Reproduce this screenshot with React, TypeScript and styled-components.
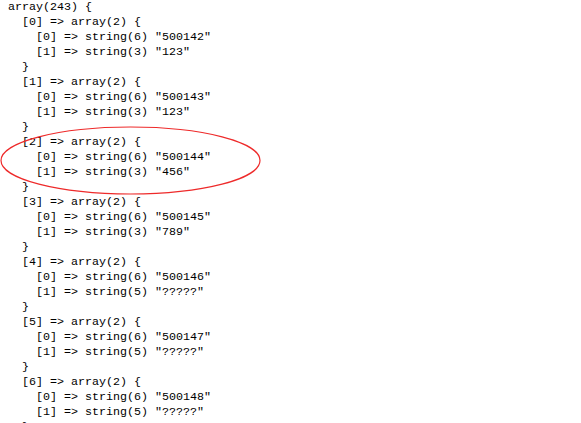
import React from "react";
import styled, { createGlobalStyle } from "styled-components";

const Global = createGlobalStyle`
  html, body { margin: 0; padding: 0; background: #ffffff; }
  body { overflow: hidden; }
`;

const Page = styled.div`
  position: relative;
  width: 581px;
  height: 423px;
  overflow: hidden;
  background: #ffffff;
`;

const Dump = styled.pre`
  margin: 0;
  padding: 0 0 0 8px;
  font-family: "Liberation Mono", "DejaVu Sans Mono", monospace;
  font-size: 11.67px;
  line-height: 15px;
  color: #000000;
  white-space: pre;
`;

const Line = styled.div<{ $depth: number }>`
  padding-left: ${(p) => p.$depth * 14}px;
  height: 15px;
`;

const Circle = styled.svg`
  position: absolute;
  left: 0;
  top: 0;
  pointer-events: none;
`;

const rows: [string, string][] = [
  ["500142", "123"],
  ["500143", "123"],
  ["500144", "456"],
  ["500145", "789"],
  ["500146", "?????"],
  ["500147", "?????"],
  ["500148", "?????"],
];

export default function App() {
  const lines: { depth: number; text: string }[] = [
    { depth: 0, text: "array(243) {" },
  ];
  rows.forEach(([a, b], i) => {
    lines.push({ depth: 1, text: `[${i}] => array(2) {` });
    lines.push({ depth: 2, text: `[0] => string(${a.length}) "${a}"` });
    lines.push({ depth: 2, text: `[1] => string(${b.length}) "${b}"` });
    lines.push({ depth: 1, text: "}" });
  });
  return (
    <Page>
      <Global />
      <Dump>
        {lines.map((l, i) => (
          <Line key={i} $depth={l.depth}>
            {l.text}
          </Line>
        ))}
      </Dump>
      <Circle width={581} height={423}>
        <ellipse cx={130.5} cy={160.5} rx={129.5} ry={33.5} fill="none" stroke="#ee2a2a" strokeWidth={1.2} />
      </Circle>
    </Page>
  );
}
